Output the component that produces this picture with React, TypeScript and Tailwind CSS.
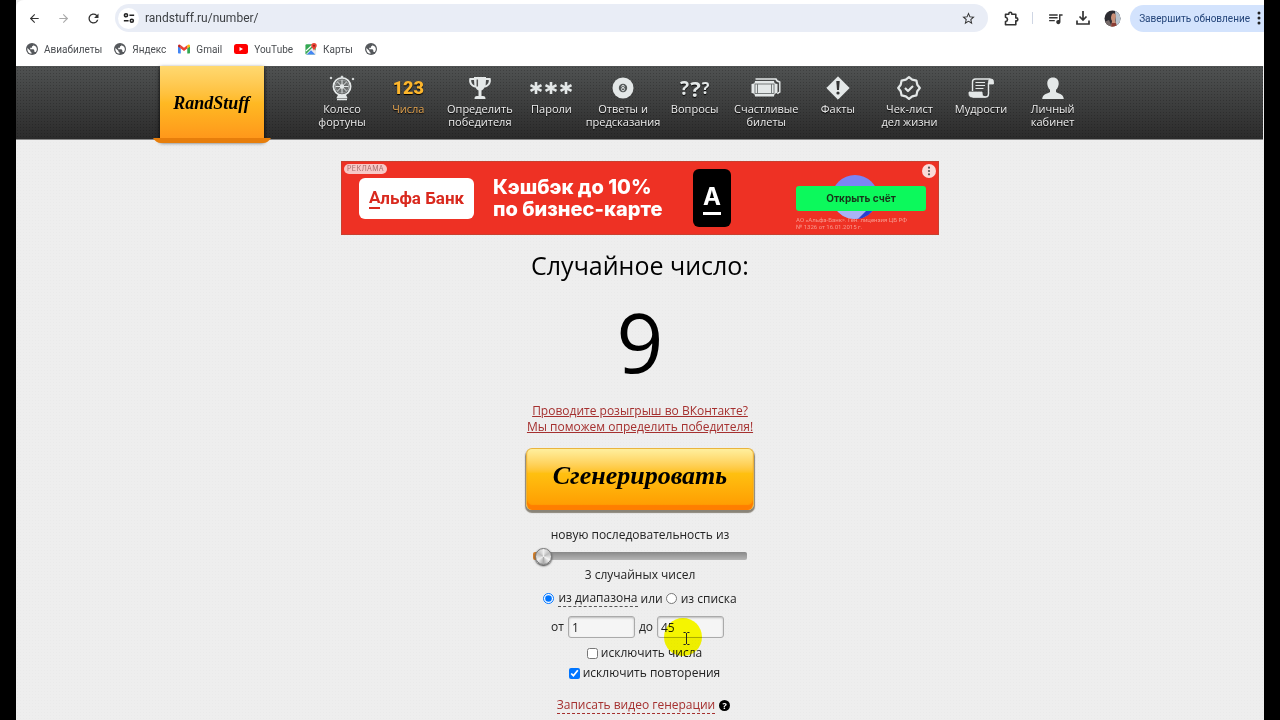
import type { ReactNode } from 'react';
import { ArrowLeft, ArrowRight } from 'lucide-react';
import { MdOutlineQueueMusic, MdRefresh, MdStarOutline } from 'react-icons/md';

const light = '#e4e8e8';

const SiteSettingsIcon = () => (
  <svg viewBox="0 0 14 14" className="w-3 h-3" fill="none" stroke="#222" strokeWidth="1.8">
    <circle cx="3.5" cy="3.8" r="1.8" />
    <path d="M7.500 3.8H13M1 10.2h5.5" />
    <circle cx="10.3" cy="10.2" r="1.8" />
  </svg>
);

const ExtensionIcon = () => (
  <svg viewBox="0 0 15 15" className="w-[15px] h-[15px]" fill="none" stroke="#333" strokeWidth="1.600" strokeLinejoin="round">
    <path d="M1.500 3.200h3.300V2.700a1.500 1.500 0 0 1 3 0v.5h4v3.700h.5a1.500 1.500 0 0 1 0 3h-.5v3.900H1.500v-3.300q2-.3 2-2.100t-2-2.100z" />
  </svg>
);

const GmailIcon = () => (
  <svg viewBox="0 0 24 18" className="w-3 h-[10px]">
    <path d="M0 2v14.500Q0 18 1.500 18H5.500V8z" fill="#4285f4" />
    <path d="M24 2v14.500Q24 18 22.500 18H18.500V8z" fill="#34a853" />
    <path d="M0 2.500Q1.500-1.500 5.500 1.500V8L0 4z" fill="#c5221f" />
    <path d="M24 2.500Q22.500-1.500 18.500 1.500V8L24 4z" fill="#fbbc04" />
    <path d="M5.500 1.500L12 6.500l6.500-5V8L12 13 5.500 8z" fill="#ea4335" />
  </svg>
);

const YouTubeIcon = () => (
  <svg viewBox="0 0 14 10" className="w-[14px] h-[10px]">
    <rect width="14" height="10" rx="2.500" fill="#f00" />
    <path d="M5.500 3v4L9 5z" fill="#fff" />
  </svg>
);

const MapsIcon = () => (
  <svg viewBox="0 0 14 14" className="w-3 h-3">
    <rect x="0.500" y="1.500" width="12" height="12" rx="1.500" fill="#34a853" />
    <path d="M1 13L9 5l4 4v3.500l-1 1z" fill="#e8eaed" />
    <path d="M2 13.500L7 8.500l5 5z" fill="#4285f4" />
    <path d="M1 9.500L9 2" stroke="#fff" strokeWidth="1.500" />
    <path d="M10.500 0a3.200 3.200 0 0 1 3.200 3.200c0 2-2.400 3-3.200 5.800-.8-2.800-3.200-3.800-3.200-5.800A3.200 3.200 0 0 1 10.500 0z" fill="#ea4335" />
    <circle cx="10.500" cy="3.200" r="1.100" fill="#8c1d18" />
  </svg>
);

const GlobeIcon = () => (
  <svg viewBox="0 0 24 24" className="w-3 h-3">
    <circle cx="12" cy="12" r="12" fill="#55585c" />
    <path d="M14.500 2.500l.5 2.500-3 2v2.500H8.500v3h6.500l1.500 2 .5 3.500h2.500c4.500-5 2-12-5-13.500z" fill="#fff" />
    <path d="M2.800 10l6.200 6v2l2 1v2.700C5.500 21 2 16 2.800 10z" fill="#fff" />
  </svg>
);

const WheelIcon = () => (
  <svg viewBox="0 0 26 26" className="w-[26px] h-[26px]" fill="none" stroke={light}>
    <circle cx="13" cy="11.500" r="8.600" strokeWidth="1.800" />
    <circle cx="13" cy="11.500" r="6.800" fill="#b9bfbf" fillOpacity="0.350" strokeWidth="0.500" />
    <path d="M13 5v13M6.500 11.500h13M8.400 6.900l9.200 9.200M17.600 6.900l-9.200 9.200" strokeWidth="1" />
    <circle cx="13" cy="11.500" r="1.800" fill={light} />
    <path d="M9.500 20.500h7l1 2h-9zM8 24.500h10" fill={light} strokeWidth="1.400" />
    <circle cx="2" cy="3" r="0.800" fill={light} />
    <circle cx="24" cy="4" r="0.800" fill={light} />
    <circle cx="13" cy="1.800" r="0.800" fill={light} />
  </svg>
);

const TrophyIcon = () => (
  <svg viewBox="0 0 24 24" className="w-6 h-6" fill={light}>
    <path fillRule="evenodd" d="M6 1h12v1h4.500c1.500 5-1.500 9-6 9.500-.8 1.500-2 2.500-3 3V20h1.500c2 0 2.500 1 2.500 3H6.500c0-2 .5-3 2.500-3h1.500v-5.500c-1-.5-2.200-1.500-3-3C3 11 0 7 1.500 2H6zM6 4H3.200c-.2 2.500 1 4.600 3.200 5.400zM18 4l-.4 5.400c2.200-.8 3.400-2.900 3.200-5.400z" />
    <path d="M9.300 3.500v7" stroke="#555" strokeWidth="1.500" />
  </svg>
);

const PasswordIcon = () => (
  <svg viewBox="0 0 44 14" className="w-11 h-[14px]" stroke={light} strokeWidth="2.600">
    <path d="M7 1v12M1.500 4.200l11 5.600M12.500 4.200l-11 5.600" />
    <path d="M22 1v12M16.500 4.200l11 5.600M27.500 4.200l-11 5.600" />
    <path d="M37 1v12M31.500 4.200l11 5.600M42.500 4.200l-11 5.600" />
  </svg>
);

const BallIcon = () => (
  <svg viewBox="0 0 22 22" className="w-[22px] h-[22px]">
    <circle cx="11" cy="11" r="10.500" fill={light} />
    <circle cx="11" cy="11" r="4.200" fill="#555a5a" />
    <g fill="none" stroke={light} strokeWidth="0.900">
      <circle cx="11" cy="9.500" r="1.200" />
      <circle cx="11" cy="12.300" r="1.500" />
    </g>
  </svg>
);

const TicketIcon = () => (
  <svg viewBox="0 0 30 20" className="w-[30px] h-5">
    <path d="M4.500 1H25q.5 2.500 3.800 3v10q-1.500.5-2.300 2" fill="none" stroke={light} strokeWidth="1.400" />
    <path d="M4 3h19q0 3 3.500 3v9q-3.500 0-3.500 3.500H4Q4 15 .5 15V6Q4 6 4 3z" fill={light} />
    <rect x="4" y="6" width="19" height="9.500" fill="none" stroke="#6a6f6f" strokeWidth="0.900" />
    <path d="M6.500 6v9.500M20.500 6v9.500" stroke="#6a6f6f" strokeWidth="0.900" />
  </svg>
);

const FactIcon = () => (
  <svg viewBox="0 0 24 24" className="w-6 h-6">
    <path d="M12 .8L23.200 12 12 23.200.8 12z" fill={light} stroke={light} strokeLinejoin="round" />
    <path d="M10.300 5h3.400l-.7 9h-2z" fill="#333" />
    <circle cx="12" cy="17" r="1.600" fill="#333" />
  </svg>
);

const ChecklistIcon = () => (
  <svg viewBox="0 0 24 24" className="w-6 h-6" fill="none" stroke={light} strokeWidth="2.200" strokeLinejoin="round">
    <path d="M12 1.200l3.200 2.500 4.200.900.900 4.200 2.500 3.200-2.500 3.200-.9 4.200-4.200.9-3.200 2.500-3.200-2.500-4.200-.9-.9-4.200L1.200 12l2.500-3.200.9-4.200 4.200-.9z" />
    <path d="M8 12l3 3 5-5" />
  </svg>
);

const ScrollIcon = () => (
  <svg viewBox="0 0 26 20" className="w-[26px] h-5" fill="none" stroke={light} strokeWidth="1.400">
    <path d="M4.500 13V4q0-3 3-3h15M20.500 5v11q0 3-3 3h-13" />
    <path d="M20.500 6V3.500Q20.500 1 23 1t2.500 2.500V6z" fill={light} strokeWidth="0.800" />
    <path d="M1 14h13q0 5 3.500 5H3.500Q.5 19 1 14z" fill={light} strokeWidth="0.800" />
    <path d="M7.500 4.500h9.500M7.500 7.500h9.500M7.500 10.500h8" strokeWidth="1.100" />
  </svg>
);

const PersonIcon = () => (
  <svg viewBox="0 0 22 22" className="w-[22px] h-[22px]" fill={light}>
    <path d="M11 .5c3.700 0 6 2.500 5.700 6.500-.2 2.500-1.200 4.500-2.700 5.800V15c1.500 1.500 7.500 1.500 7.800 7H.2C.5 16.500 6.500 16.500 8 15v-2.200C6.500 11.500 5.500 9.500 5.300 7 5 3 7.300.5 11 .5z" />
  </svg>
);

type NavItem = { icon: ReactNode; lines: string[]; active?: boolean };

const navItems: NavItem[] = [
  { icon: <WheelIcon />, lines: ['Колесо', 'фортуны'] },
  {
    icon: <span className="font-['Roboto',sans-serif] text-lg font-black text-[#fdb62c]">123</span>,
    lines: ['Числа'],
    active: true,
  },
  { icon: <TrophyIcon />, lines: ['Определить', 'победителя'] },
  { icon: <PasswordIcon />, lines: ['Пароли'] },
  { icon: <BallIcon />, lines: ['Ответы и', 'предсказания'] },
  {
    icon: (
      <span className="flex items-center gap-px font-bold leading-none text-[#e4e8e8]">
        <span className="text-[19px]">?</span>
        <span className="text-[22px]">?</span>
        <span className="text-base">?</span>
      </span>
    ),
    lines: ['Вопросы'],
  },
  { icon: <TicketIcon />, lines: ['Счастливые', 'билеты'] },
  { icon: <FactIcon />, lines: ['Факты'] },
  { icon: <ChecklistIcon />, lines: ['Чек-лист', 'дел жизни'] },
  { icon: <ScrollIcon />, lines: ['Мудрости'] },
  { icon: <PersonIcon />, lines: ['Личный', 'кабинет'] },
];

const bookmarks = [
  { icon: <GlobeIcon />, label: 'Авиабилеты' },
  { icon: <GlobeIcon />, label: 'Яндекс' },
  { icon: <GmailIcon />, label: 'Gmail' },
  { icon: <YouTubeIcon />, label: 'YouTube' },
  { icon: <MapsIcon />, label: 'Карты' },
  { icon: <GlobeIcon />, label: '' },
];

const BrowserBar = () => (
  <div className="h-[66px] bg-white rounded-tl-lg overflow-hidden font-['Roboto',sans-serif]">
    <div className="flex items-center h-9 pl-[11px]">
      <button aria-label="Назад" className="flex justify-center w-[15px]"><ArrowLeft className="w-[13px] h-[13px] text-[#333]" /></button>
      <button aria-label="Вперёд" className="flex justify-center w-[15px] ml-[14px]"><ArrowRight className="w-[13px] h-[13px] text-[#aaa]" /></button>
      <button aria-label="Обновить" className="flex justify-center w-[15px] ml-[15px]"><MdRefresh className="w-[15px] h-[15px] text-[#333]" /></button>
      <div className="flex items-center flex-1 h-7 ml-[14px] pl-[3px] pr-3 rounded-full bg-[#e9edf6]">
        <button aria-label="Сведения о сайте" className="flex items-center justify-center w-[21px] h-[21px] rounded-full bg-white">
          <SiteSettingsIcon />
        </button>
        <input aria-label="Адрес" defaultValue="randstuff.ru/number/" className="flex-1 ml-[6px] bg-transparent text-xs text-[#3c3f43] outline-none" />
        <button aria-label="В закладки"><MdStarOutline className="w-[15px] h-[15px] text-[#333]" /></button>
      </div>
      <button aria-label="Расширения" className="ml-4"><ExtensionIcon /></button>
      <span className="w-px h-3 ml-[13px] bg-[#cfd6e4]" />
      <button aria-label="Медиа" className="ml-[14px]"><MdOutlineQueueMusic className="w-[17px] h-[17px] text-[#333]" /></button>
      <button aria-label="Загрузки" className="ml-3">
        <svg viewBox="0 0 14 14" className="w-[14px] h-[14px]" fill="none" stroke="#333" strokeWidth="1.700">
          <path d="M7 0v8.500M3.500 5.500L7 9l3.500-3.500M1 9.500V13h12V9.500" />
        </svg>
      </button>
      <button aria-label="Профиль" className="ml-[14px]">
        <svg viewBox="0 0 17 17" className="w-[17px] h-[17px]">
          <clipPath id="avatar"><circle cx="8.500" cy="8.500" r="8" /></clipPath>
          <g clipPath="url(#avatar)">
            <rect width="17" height="17" fill="#2c2b31" />
            <path d="M11 0h6v17h-5z" fill="#b8c4cf" />
            <path d="M0 12l5-2 3 7H0z" fill="#756a69" />
            <path d="M8 4q3-2 4 2l-1 4 2 7H7l1-6q-2-3 0-7z" fill="#c98f77" />
            <path d="M8 13h4l1 4H7z" fill="#8a3d35" />
          </g>
        </svg>
      </button>
      <button className="flex items-center h-[27px] ml-[9px] pl-[9px] rounded-l-full bg-[#d3e3fd] text-[10px] text-[#24457a] whitespace-nowrap">
        Завершить обновление
        <svg viewBox="0 0 4 14" className="w-1 h-[14px] ml-[7px] mr-[3px]" fill="#222">
          <circle cx="2" cy="2" r="1.500" />
          <circle cx="2" cy="7" r="1.500" />
          <circle cx="2" cy="12" r="1.500" />
        </svg>
      </button>
    </div>
    <nav className="flex items-center gap-3 h-[26px] pl-[10px] text-[10px] text-[#4a4d51]">
      {bookmarks.map((b, i) => (
        <a key={i} href="#" aria-label={b.label || 'Закладка'} className="flex items-center gap-[6px]">
          {b.icon}
          {b.label && <span>{b.label}</span>}
        </a>
      ))}
    </nav>
  </div>
);

const SiteHeader = () => (
  <header className="h-[74px] mr-px border-b border-[#8a8a8a] bg-[radial-gradient(#00000033_1px,transparent_1px),linear-gradient(#505252,#2b2b2b)] bg-[size:3px_3px,100%_100%]">
    <div className="flex max-w-[960px] mx-auto">
      <a href="#" className="relative flex items-center justify-center w-[104px] h-[74px] shrink-0 bg-linear-to-b from-[#ffd970] via-[#ffb923] to-[#ff961a] font-['Liberation_Serif',serif] text-lg italic font-bold text-black shadow-[0_2px_4px_#000]">
        RandStuff
        <svg viewBox="0 0 118 5" className="absolute left-[-7px] top-[72px] w-[118px] h-[5px]">
          <path d="M0 0h118q-3 5-8 5H8Q3 5 0 0z" fill="#e77e0b" />
        </svg>
      </a>
      <nav className="flex flex-1 ml-12 mr-[31px]">
        {navItems.map((item) => (
          <a
            key={item.lines[0]}
            href="#"
            className={`flex flex-col items-center flex-1 min-w-0 first:flex-none first:w-[61px] pt-2 text-[11px] leading-[13px] whitespace-nowrap [text-shadow:0_1px_1px_#000] ${item.active ? 'text-[#e2a350]' : 'text-[#eeeeee]'}`}
          >
            <span className="flex items-center justify-center h-7">{item.icon}</span>
            {item.lines.map((line) => (
              <span key={line}>{line}</span>
            ))}
          </a>
        ))}
      </nav>
    </div>
  </header>
);

const AdBanner = () => (
  <aside className="relative flex items-center w-full max-w-[598px] h-[74px] px-[17px] border border-[#c9402f] bg-[#ee3124] font-['Inter',sans-serif]">
    <span className="absolute left-[2px] top-[2px] px-[3px] rounded-full bg-[#f7c9c6] text-[7px] leading-[10px] tracking-wider text-[#a86d6b]">РЕКЛАМА</span>
    <div className="flex items-center justify-center w-[115px] h-[41px] rounded-md bg-white font-['Roboto',sans-serif] text-[17px] leading-[22px] font-bold text-[#d9291e]">
      <span className="border-b-2 border-[#d9291e] leading-5">А</span>льфа Банк
    </div>
    <p className="ml-[19px] text-xl leading-[22px] font-extrabold text-white whitespace-nowrap">
      Кэшбэк до 10%
      <br />
      по бизнес-карте
    </p>
    <div className="flex items-center justify-center w-[38px] h-[58px] ml-auto rounded-md bg-black text-2xl font-bold text-white">
      <span className="border-b-[3px] border-white leading-[30px]">А</span>
    </div>
    <div className="relative w-[130px] ml-[65px] mr-[-5px] pt-[19px]">
      <svg viewBox="0 0 50 48" className="absolute left-[34px] top-[6px] w-[50px] h-12">
        <ellipse cx="25" cy="24" rx="23" ry="22" fill="#7b86f5" />
        <path d="M4 34q18-2 40 2-8 10-20 10T4 34z" fill="#a9b4f5" />
        <path d="M28 46q12-2 16-11l-6 1z" fill="#2940cf" />
      </svg>
      <button className="relative block w-full h-[25px] rounded-[3px] bg-[#0cf95c] text-[10px] font-bold text-[#173519]">Открыть счёт</button>
      <p className="relative mt-[5px] font-['Roboto',sans-serif] text-[6px] leading-[7px] text-[#f79a8f] whitespace-nowrap">
        АО «Альфа-Банк». Ген. лицензия ЦБ РФ
        <br />
        № 1326 от 16.01.2015 г.
      </p>
    </div>
    <button aria-label="Меню рекламы" className="absolute right-[2px] top-[2px] flex items-center justify-center w-[14px] h-[14px] rounded-full bg-[#f9dcd9]">
      <svg viewBox="0 0 4 12" className="w-1 h-[10px]" fill="#555">
        <circle cx="2" cy="2" r="1.300" />
        <circle cx="2" cy="6" r="1.300" />
        <circle cx="2" cy="10" r="1.300" />
      </svg>
    </button>
  </aside>
);

const inputClass =
  'w-[67px] h-[22px] px-[3px] rounded-[3px] border border-[#aaa] bg-[#f5f5f5] text-xs text-[#222] shadow-[inset_0_1px_2px_#bbb] outline-none';

const Generator = () => (
  <main className="flex flex-col items-center pt-[21px] text-xs leading-4 text-[#222]">
    <AdBanner />
    <h1 className="mt-3 text-[25px] leading-9 text-black">Случайное число:</h1>
    <output className="mt-[10px] text-[82px] leading-[96px] text-black">9</output>
    <p className="mt-[14px] text-center text-[#a5302f]">
      <a href="#" className="underline">
        Проводите розыгрыш во ВКонтакте?
        <br />
        Мы поможем определить победителя!
      </a>
    </p>
    <button className="w-[228px] h-[62px] mt-[13px] pb-2 rounded-md border border-[#e9b43d] border-b-0 bg-linear-to-b from-[#ffef9d] via-[#ffc010] via-40% to-[#ff9800] font-['Liberation_Serif',serif] text-[26px] leading-9 italic font-bold text-black shadow-[inset_0_-5px_1px_#ff7e00,0_2px_1px_1px_#8a8478]">
      Сгенерировать
    </button>
    <label htmlFor="count" className="mt-[17px]">новую последовательность из</label>
    <input
      id="count"
      type="range"
      min={2}
      max={100}
      defaultValue={3}
      className="w-[214px] h-5 mt-[3px] appearance-none bg-transparent [&::-webkit-slider-runnable-track]:h-2 [&::-webkit-slider-runnable-track]:rounded-xs [&::-webkit-slider-runnable-track]:bg-[linear-gradient(90deg,#d9822b_6px,transparent_6px),linear-gradient(#888,#b5b5b5)] [&::-webkit-slider-thumb]:appearance-none [&::-webkit-slider-thumb]:w-[17px] [&::-webkit-slider-thumb]:h-[17px] [&::-webkit-slider-thumb]:mt-[-4px] [&::-webkit-slider-thumb]:rounded-full [&::-webkit-slider-thumb]:border [&::-webkit-slider-thumb]:border-[#777] [&::-webkit-slider-thumb]:bg-[conic-gradient(#eee,#bbb,#f5f5f5,#aaa,#eee,#bbb,#eee)] [&::-webkit-slider-thumb]:shadow-[0_1px_2px_#333]"
    />
    <output htmlFor="count" className="mt-px">3 случайных чисел</output>
    <div className="flex items-center mt-[7px]">
      <input id="range" type="radio" name="source" defaultChecked className="w-[11px] h-[11px] mr-1" />
      <label htmlFor="range" className="border-b border-dashed border-[#555]">из диапазона</label>
      <span className="mx-[3px]">или</span>
      <input id="list" type="radio" name="source" className="w-[11px] h-[11px] mr-1" />
      <label htmlFor="list">из списка</label>
    </div>
    <div className="flex items-center mt-[9px] mr-[5px]">
      <label htmlFor="from" className="mr-1">от</label>
      <input id="from" type="text" defaultValue="1" className={inputClass} />
      <label htmlFor="to" className="mx-1">до</label>
      <div className="relative flex">
        <input id="to" type="text" defaultValue="45" className={inputClass} />
        <span className="absolute left-[7px] top-[2px] w-[38px] h-[38px] rounded-full bg-[#ffff00] mix-blend-multiply pointer-events-none" />
        <svg viewBox="0 0 7 13" className="absolute left-[26px] top-4 w-[7px] h-[13px]" fill="none" stroke="#222">
          <path d="M.5.5h2l1 1 1-1h2M3.500 1v11M.5 12.500h2l1-1 1 1h2" />
        </svg>
      </div>
    </div>
    <label className="flex items-center mt-[7px] mr-[-9px]">
      <input type="checkbox" className="w-[11px] h-[11px] mr-[3px]" />
      исключить числа
    </label>
    <label className="flex items-center mt-1 mr-[-9px]">
      <input type="checkbox" defaultChecked className="w-[11px] h-[11px] mr-[3px]" />
      исключить повторения
    </label>
    <div className="flex items-center gap-1 mt-4 mr-[-7px]">
      <a href="#" className="border-b border-dashed border-[#a5302f] text-[#a5302f]">Записать видео генерации</a>
      <button aria-label="Справка" className="w-[11px] h-[11px] rounded-full bg-black text-[9px] leading-[11px] font-bold text-white">?</button>
    </div>
  </main>
);

const App = () => {
  return (
    <div className="min-h-screen px-4 bg-black font-['Open_Sans','Noto_Sans',sans-serif]">
      <div className="min-h-screen bg-[#eeeeee] bg-[radial-gradient(#eaeaea_1px,transparent_1px)] bg-[size:3px_3px]">
        <BrowserBar />
        <SiteHeader />
        <Generator />
      </div>
    </div>
  );
};

export default App;
